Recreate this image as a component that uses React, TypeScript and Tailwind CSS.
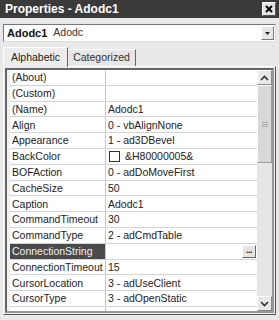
import React from "react";

const rows: { name: string; value: string; kind?: "color" | "selected" }[] = [
  { name: "(About)", value: "" },
  { name: "(Custom)", value: "" },
  { name: "(Name)", value: "Adodc1" },
  { name: "Align", value: "0 - vbAlignNone" },
  { name: "Appearance", value: "1 - ad3DBevel" },
  { name: "BackColor", value: "&H80000005&", kind: "color" },
  { name: "BOFAction", value: "0 - adDoMoveFirst" },
  { name: "CacheSize", value: "50" },
  { name: "Caption", value: "Adodc1" },
  { name: "CommandTimeout", value: "30" },
  { name: "CommandType", value: "2 - adCmdTable" },
  { name: "ConnectionString", value: "", kind: "selected" },
  { name: "ConnectionTimeout", value: "15" },
  { name: "CursorLocation", value: "3 - adUseClient" },
  { name: "CursorType", value: "3 - adOpenStatic" },
  { name: "", value: "" },
];

function Chevron({ up }: { up?: boolean }) {
  return (
    <svg width="9" height="6" viewBox="0 0 9 6">
      <path
        d={up ? "M1 5 L4.5 1.5 L8 5" : "M1 1 L4.5 4.5 L8 1"}
        fill="none"
        stroke="#333"
        strokeWidth="1.6"
      />
    </svg>
  );
}

export default function App() {
  return (
    <div
      className="w-[279px] h-[320px] overflow-hidden bg-[#e8e8e8] flex flex-col"
      style={{ fontFamily: '"Liberation Sans", Arial, sans-serif' }}
    >
      {/* Title bar */}
      <div className="h-[18px] bg-[#3a3a3a] flex items-center justify-between pl-[5px] pr-[3px] shrink-0">
        <span className="text-white font-bold text-[12px] leading-none">Properties - Adodc1</span>
        <div className="w-[14px] h-[14px] bg-[#e4e4e4] border border-t-white border-l-white border-r-[#555] border-b-[#555] flex items-center justify-center">
          <svg width="8" height="8" viewBox="0 0 8 8">
            <path d="M1 1 L7 7 M7 1 L1 7" stroke="#000" strokeWidth="2" />
          </svg>
        </div>
      </div>

      {/* Combo */}
      <div className="mt-[6px] mx-[3px] h-[18px] bg-white border border-t-[#777] border-l-[#777] border-r-[#ddd] border-b-[#ddd] flex items-center shrink-0">
        <span className="pl-[3px] font-bold text-[11px] text-[#111]">Adodc1</span>
        <span className="pl-[6px] text-[10.5px] text-[#333]">Adodc</span>
        <div className="ml-auto mr-[1px] w-[13px] h-[14px] bg-[#e6e6e6] border border-t-white border-l-white border-r-[#777] border-b-[#777] flex items-center justify-center">
          <svg width="5" height="3" viewBox="0 0 5 3">
            <path d="M0 0 H5 L2.5 3 Z" fill="#222" />
          </svg>
        </div>
      </div>

      {/* Tabs */}
      <div className="mt-[4px] pl-[3px] flex items-end h-[20px] shrink-0 relative z-10">
        <div className="h-[20px] w-[65px] border-t border-l border-r border-t-white border-l-white border-r-[#666] bg-[#ececec] flex items-center justify-center text-[10.5px] text-[#222] -mb-[1px]">
          Alphabetic
        </div>
        <div className="h-[17px] w-[68px] border-t border-r border-t-white border-r-[#666] bg-[#e6e6e6] flex items-center justify-center text-[10.5px] text-[#333]">
          Categorized
        </div>
      </div>

      {/* Grid panel */}
      <div className="mx-[3px] h-[249px] border border-t-white border-l-white border-r-[#555] border-b-[#555] bg-[#ececec] p-[1px] shrink-0">
        <div className="h-full border-2 border-t-[#666] border-l-[#666] border-r-[#999] border-b-[#999] flex">
          <div className="flex-1 pl-[3px] overflow-hidden bg-[#f0f0f0]">
            <div className="bg-white">
              {rows.map((r, i) => (
                <div key={i} className="h-[15.8px] flex border-b border-[#d4d4d4] text-[10.5px] leading-none">
                  <div
                    className={
                      "w-[96px] border-r border-[#c8c8c8] flex items-center pl-[2px] shrink-0 " +
                      (r.kind === "selected" ? "bg-[#4a4a4a] text-[#f2f2f2]" : "text-[#222]")
                    }
                  >
                    {r.name}
                  </div>
                  <div className="flex-1 flex items-center pl-[2px] text-[#222] relative">
                    {r.kind === "color" && (
                      <span className="w-[11px] h-[11px] border border-[#333] bg-white mr-[5px] ml-[1px]" />
                    )}
                    {r.value}
                    {r.kind === "selected" && (
                      <div className="ml-auto mr-[1px] w-[14px] h-[13px] bg-[#e4e4e4] border border-t-white border-l-white border-r-[#666] border-b-[#666] flex items-end justify-center pb-[2px]">
                        <span className="text-[9px] leading-none tracking-[-0.5px] font-bold">...</span>
                      </div>
                    )}
                  </div>
                </div>
              ))}
            </div>
          </div>
          {/* Scrollbar */}
          <div className="w-[15px] bg-[#e6e6e6] flex flex-col shrink-0">
            <div className="h-[15px] bg-[#e8e8e8] border border-t-white border-l-white border-r-[#888] border-b-[#888] flex items-center justify-center">
              <Chevron up />
            </div>
            <div className="h-[78px] bg-[#d8d8d8] border border-t-white border-l-white border-r-[#999] border-b-[#999] flex items-center justify-center">
              <div className="flex flex-col gap-[1px]">
                <div className="w-[6px] h-[1px] bg-[#aaa]" />
                <div className="w-[6px] h-[1px] bg-[#aaa]" />
                <div className="w-[6px] h-[1px] bg-[#aaa]" />
              </div>
            </div>
            <div className="flex-1" />
            <div className="h-[15px] bg-[#e8e8e8] border border-t-white border-l-white border-r-[#888] border-b-[#888] flex items-center justify-center">
              <Chevron />
            </div>
          </div>
        </div>
      </div>
    </div>
  );
}
